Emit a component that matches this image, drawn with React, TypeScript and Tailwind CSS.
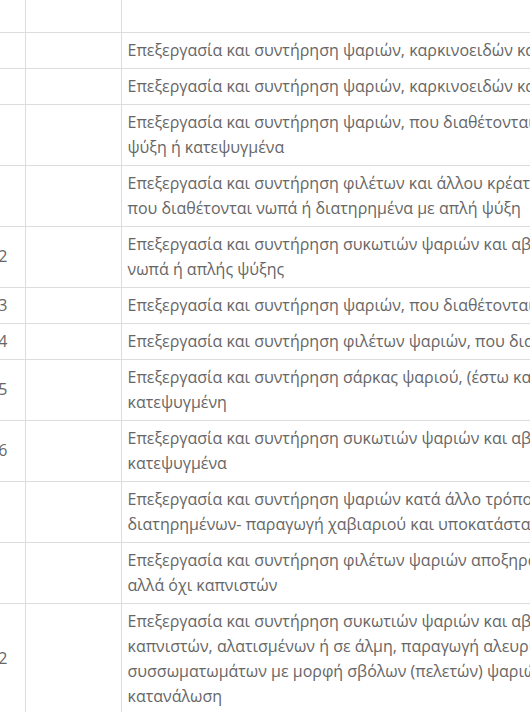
import React from "react";

type Row = { code: string; lines: string[] };

const rows: Row[] = [
  { code: "10.2", lines: ["Επεξεργασία και συντήρηση ψαριών, καρκινοειδών και μαλακίων"] },
  { code: "10.20", lines: ["Επεξεργασία και συντήρηση ψαριών, καρκινοειδών και μαλακίων"] },
  {
    code: "10.20.",
    lines: [
      "Επεξεργασία και συντήρηση ψαριών, που διαθέτονται νωπά ή διατηρημένα με απλή",
      "ψύξη ή κατεψυγμένα",
    ],
  },
  {
    code: "10.20.1",
    lines: [
      "Επεξεργασία και συντήρηση φιλέτων και άλλου κρέατος ψαριών (έστω και αλεσμένου),",
      "που διαθέτονται νωπά ή διατηρημένα με απλή ψύξη",
    ],
  },
  {
    code: "10.20.12",
    lines: [
      "Επεξεργασία και συντήρηση συκωτιών ψαριών και αβγοσφαιρίων (αυγοτάραχου), που διαθέτονται",
      "νωπά ή απλής ψύξης",
    ],
  },
  { code: "10.20.13", lines: ["Επεξεργασία και συντήρηση ψαριών, που διαθέτονται κατεψυγμένα"] },
  { code: "10.20.14", lines: ["Επεξεργασία και συντήρηση φιλέτων ψαριών, που διαθέτονται κατεψυγμένα"] },
  {
    code: "10.20.15",
    lines: [
      "Επεξεργασία και συντήρηση σάρκας ψαριού, (έστω και αλεσμένης), που διαθέτεται",
      "κατεψυγμένη",
    ],
  },
  {
    code: "10.20.16",
    lines: [
      "Επεξεργασία και συντήρηση συκωτιών ψαριών και αβγοσφαιρίων (αυγοτάραχου), που διαθέτονται",
      "κατεψυγμένα",
    ],
  },
  {
    code: "10.20.2",
    lines: [
      "Επεξεργασία και συντήρηση ψαριών κατά άλλο τρόπο, εκτός από την παρασκευή έτοιμων γευμάτων",
      "διατηρημένων- παραγωγή χαβιαριού και υποκατάστατων χαβιαριού",
    ],
  },
  {
    code: "10.20.2",
    lines: [
      "Επεξεργασία και συντήρηση φιλέτων ψαριών αποξηραμένων, αλατισμένων ή σε άλμη,",
      "αλλά όχι καπνιστών",
    ],
  },
  {
    code: "10.20.22",
    lines: [
      "Επεξεργασία και συντήρηση συκωτιών ψαριών και αβγοσφαιρίων (αυγοτάραχου) αποξηραμένων,",
      "καπνιστών, αλατισμένων ή σε άλμη, παραγωγή αλευριών, σκονών και",
      "συσσωματωμάτων με μορφή σβόλων (πελετών) ψαριών, κατάλληλων για ανθρώπινη",
      "κατανάλωση",
    ],
  },
];

export default function App() {
  return (
    <div
      className="h-[712px] w-[530px] overflow-hidden bg-white text-[16px] leading-[25px] text-[#666]"
      style={{ fontFamily: "'Open Sans', 'Noto Sans', sans-serif" }}
    >
      <table className="ml-[-64px] w-[1200px] table-fixed border-collapse">
        <colgroup>
          <col className="w-[89px]" />
          <col className="w-[96px]" />
          <col />
        </colgroup>
        <tbody>
          <tr className="h-[32px]">
            <td className="border-r border-b border-[#ddd]" />
            <td className="border-r border-b border-[#ddd]" />
            <td className="border-b border-[#ddd]" />
          </tr>
          {rows.map((row, i) => (
            <tr key={i}>
              <td className="whitespace-nowrap border-r border-b border-[#ddd] py-[5px] pl-[8px] align-middle">
                {row.code}
              </td>
              <td className="border-r border-b border-[#ddd]" />
              <td className="whitespace-nowrap border-b border-[#ddd] py-[5px] pl-[6px] align-top">
                {row.lines.map((line, j) => (
                  <div key={j}>{line}</div>
                ))}
              </td>
            </tr>
          ))}
        </tbody>
      </table>
    </div>
  );
}
